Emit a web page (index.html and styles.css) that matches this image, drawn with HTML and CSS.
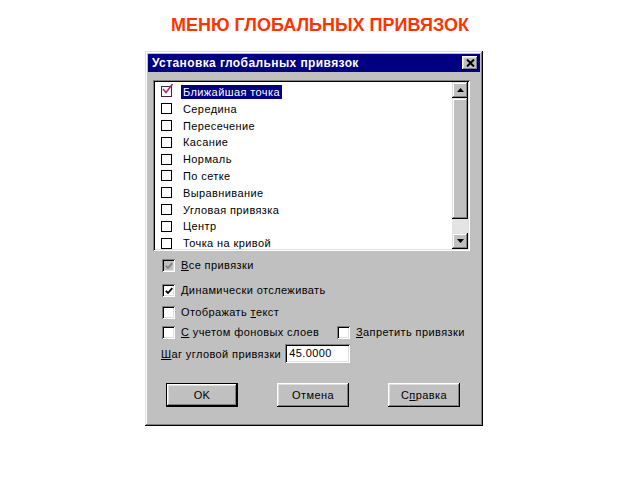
FILE: index.html
```html
<!DOCTYPE html>
<html lang="ru">
<head>
<meta charset="utf-8">
<title>Меню глобальных привязок</title>
<link rel="stylesheet" href="styles.css">
</head>
<body>
<h1 class="page-title">МЕНЮ ГЛОБАЛЬНЫХ ПРИВЯЗОК</h1>
<div class="dialog">
  <div class="titlebar">
    <span class="titlebar-text">Установка глобальных привязок</span>
    <span class="close-btn"><svg width="9" height="8" viewBox="0 0 9 8"><path d="M1 0.5 L8 7.5 M8 0.5 L1 7.5" stroke="#000" stroke-width="2"/></svg></span>
  </div>
  <div class="dialog-body">
    <div class="listbox">
      <ul class="items">
        <li class="item"><span class="lbox lbox-checked"><svg width="14" height="14" viewBox="0 0 14 14"><path d="M2 6 L5 9.5 L11.5 1" fill="none" stroke="#b02878" stroke-width="1.6"/></svg></span><span class="item-label selected">Ближайшая точка</span></li>
        <li class="item"><span class="lbox"></span><span class="item-label">Середина</span></li>
        <li class="item"><span class="lbox"></span><span class="item-label">Пересечение</span></li>
        <li class="item"><span class="lbox"></span><span class="item-label">Касание</span></li>
        <li class="item"><span class="lbox"></span><span class="item-label">Нормаль</span></li>
        <li class="item"><span class="lbox"></span><span class="item-label">По сетке</span></li>
        <li class="item"><span class="lbox"></span><span class="item-label">Выравнивание</span></li>
        <li class="item"><span class="lbox"></span><span class="item-label">Угловая привязка</span></li>
        <li class="item"><span class="lbox"></span><span class="item-label">Центр</span></li>
        <li class="item"><span class="lbox"></span><span class="item-label">Точка на кривой</span></li>
      </ul>
      <div class="scrollbar">
        <span class="sb-btn"><svg width="7" height="4" viewBox="0 0 7 4"><polygon points="3.5,0 7,4 0,4" fill="#000"/></svg></span>
        <span class="sb-thumb"></span>
        <span class="sb-track"></span>
        <span class="sb-btn"><svg width="7" height="4" viewBox="0 0 7 4"><polygon points="0,0 7,0 3.5,4" fill="#000"/></svg></span>
      </div>
    </div>

    <div class="options">
      <label class="opt opt-all"><span class="cbox cbox-disabled"><svg width="8" height="8" viewBox="0 0 8 8"><path d="M0.8 3.8 L3 6 L7.3 1.2" fill="none" stroke="#808080" stroke-width="1.8"/></svg></span><span><u>В</u>се привязки</span></label>
      <label class="opt opt-dyn"><span class="cbox"><svg width="8" height="8" viewBox="0 0 8 8"><path d="M0.8 3.8 L3 6 L7.3 1.2" fill="none" stroke="#000" stroke-width="1.8"/></svg></span><span><u>Д</u>инамически отслеживать</span></label>
      <label class="opt opt-text"><span class="cbox"></span><span>Отображать <u>т</u>екст</span></label>
      <div class="opt-pair">
        <label class="opt opt-first"><span class="cbox"></span><span><u>С</u> учетом фоновых слоев</span></label>
        <label class="opt"><span class="cbox"></span><span><u>З</u>апретить привязки</span></label>
      </div>
      <div class="step-row">
        <span class="step-label"><u>Ш</u>аг угловой привязки</span>
        <span class="input">45.0000</span>
      </div>
    </div>

    <div class="buttons">
      <span class="btn btn-default">OK</span>
      <span class="btn">Отмена</span>
      <span class="btn">С<u>п</u>равка</span>
    </div>
  </div>
</div>
</body>
</html>
```

FILE: styles.css
```css
* { box-sizing: border-box; }

body {
  margin: 0;
  background: #ffffff;
  font-family: "Liberation Sans", Arial, sans-serif;
}

.page-title {
  margin: 0;
  padding-top: 15px;
  height: 35px;
  line-height: 20px;
  font-size: 18px;
  font-weight: bold;
  color: #ff3300;
  text-align: center;
}

.dialog {
  margin-top: 16px;
  margin-left: 145px;
  width: 338px;
  height: 375px;
  padding: 3px;
  background: #c0c0c0;
  box-shadow: inset -1px -1px #000000, inset 1px 1px #dfdfdf, inset -2px -2px #808080, inset 2px 2px #ffffff;
  font-size: 11px;
  letter-spacing: 0.4px;
  color: #000;
}

.titlebar {
  height: 18px;
  background: #000080;
  display: flex;
  align-items: center;
  justify-content: space-between;
  padding: 0 2px 0 4px;
}

.titlebar-text {
  color: #fff;
  font-weight: bold;
  font-size: 12px;
  letter-spacing: 0.4px;
}

.close-btn {
  width: 16px;
  height: 14px;
  background: #c0c0c0;
  display: flex;
  align-items: center;
  justify-content: center;
  box-shadow: inset -1px -1px #000000, inset 1px 1px #ffffff, inset -2px -2px #808080, inset 2px 2px #dfdfdf;
}

.dialog-body {
  padding: 8px 0 0 5px;
}

.listbox {
  width: 317px;
  height: 171px;
  padding: 2px;
  background: #fff;
  display: flex;
  box-shadow: inset 1px 1px #808080, inset -1px -1px #ffffff, inset 2px 2px #000000, inset -2px -2px #dfdfdf;
}

.items {
  list-style: none;
  margin: 0;
  padding: 1.6px 0 0 0;
  flex: 1;
}

.item {
  height: 16.8px;
  display: flex;
  align-items: center;
}

.lbox {
  position: relative;
  width: 11px;
  height: 11px;
  margin-left: 6px;
  border: 1px solid #000;
  background: #fff;
  flex: none;
}

.lbox-checked {
  border-color: #5a1840;
}

.lbox-checked svg {
  position: absolute;
  left: -1px;
  top: -4px;
}

.item-label {
  margin-left: 9px;
  padding: 0 2px;
  line-height: 14px;
}

.item-label.selected {
  background: #000080;
  color: #fff;
}

.scrollbar {
  width: 16px;
  display: flex;
  flex-direction: column;
}

.sb-btn {
  height: 16px;
  flex: none;
  background: #c0c0c0;
  display: flex;
  align-items: center;
  justify-content: center;
  box-shadow: inset -1px -1px #000000, inset 1px 1px #dfdfdf, inset -2px -2px #808080, inset 2px 2px #ffffff;
}

.sb-thumb {
  height: 121px;
  flex: none;
  background: #c0c0c0;
  box-shadow: inset -1px -1px #000000, inset 1px 1px #dfdfdf, inset -2px -2px #808080, inset 2px 2px #ffffff;
}

.sb-track {
  flex: 1;
  background: #e4e4e4;
}

.options {
  padding-left: 9px;
}

.opt {
  display: flex;
  align-items: center;
  height: 16px;
}

.cbox {
  width: 13px;
  height: 13px;
  margin-right: 6px;
  background: #fff;
  flex: none;
  display: flex;
  align-items: center;
  justify-content: center;
  box-shadow: inset 1px 1px #808080, inset -1px -1px #ffffff, inset 2px 2px #000000, inset -2px -2px #dfdfdf;
}

.cbox svg {
  margin: 1px 0 0 1px;
}

.cbox-disabled {
  background: #c0c0c0;
}

.opt-all { margin-top: 6px; }
.opt-dyn { margin-top: 9px; }
.opt-text { margin-top: 6px; }

.opt-pair {
  margin-top: 4px;
  display: grid;
  grid-template-columns: 175px auto;
}

.step-row {
  margin-top: 4px;
  display: flex;
  align-items: center;
  height: 19px;
}

.step-label {
  margin-left: -1px;
  margin-right: 4px;
}

.input {
  width: 65px;
  height: 19px;
  padding: 3px 0 0 4px;
  background: #fff;
  box-shadow: inset 1px 1px #808080, inset -1px -1px #ffffff, inset 2px 2px #000000, inset -2px -2px #dfdfdf;
}

.buttons {
  margin-top: 20px;
  margin-left: 13px;
  display: flex;
  gap: 39px;
}

.btn {
  width: 72px;
  height: 24px;
  display: flex;
  align-items: center;
  justify-content: center;
  background: #c0c0c0;
  box-shadow: inset -1px -1px #000000, inset 1px 1px #ffffff, inset -2px -2px #808080, inset 2px 2px #dfdfdf;
}

.btn-default {
  border: 1px solid #000;
  box-shadow: inset -1px -1px #000000, inset 1px 1px #ffffff, inset -2px -2px #808080, inset 2px 2px #dfdfdf;
}
```
